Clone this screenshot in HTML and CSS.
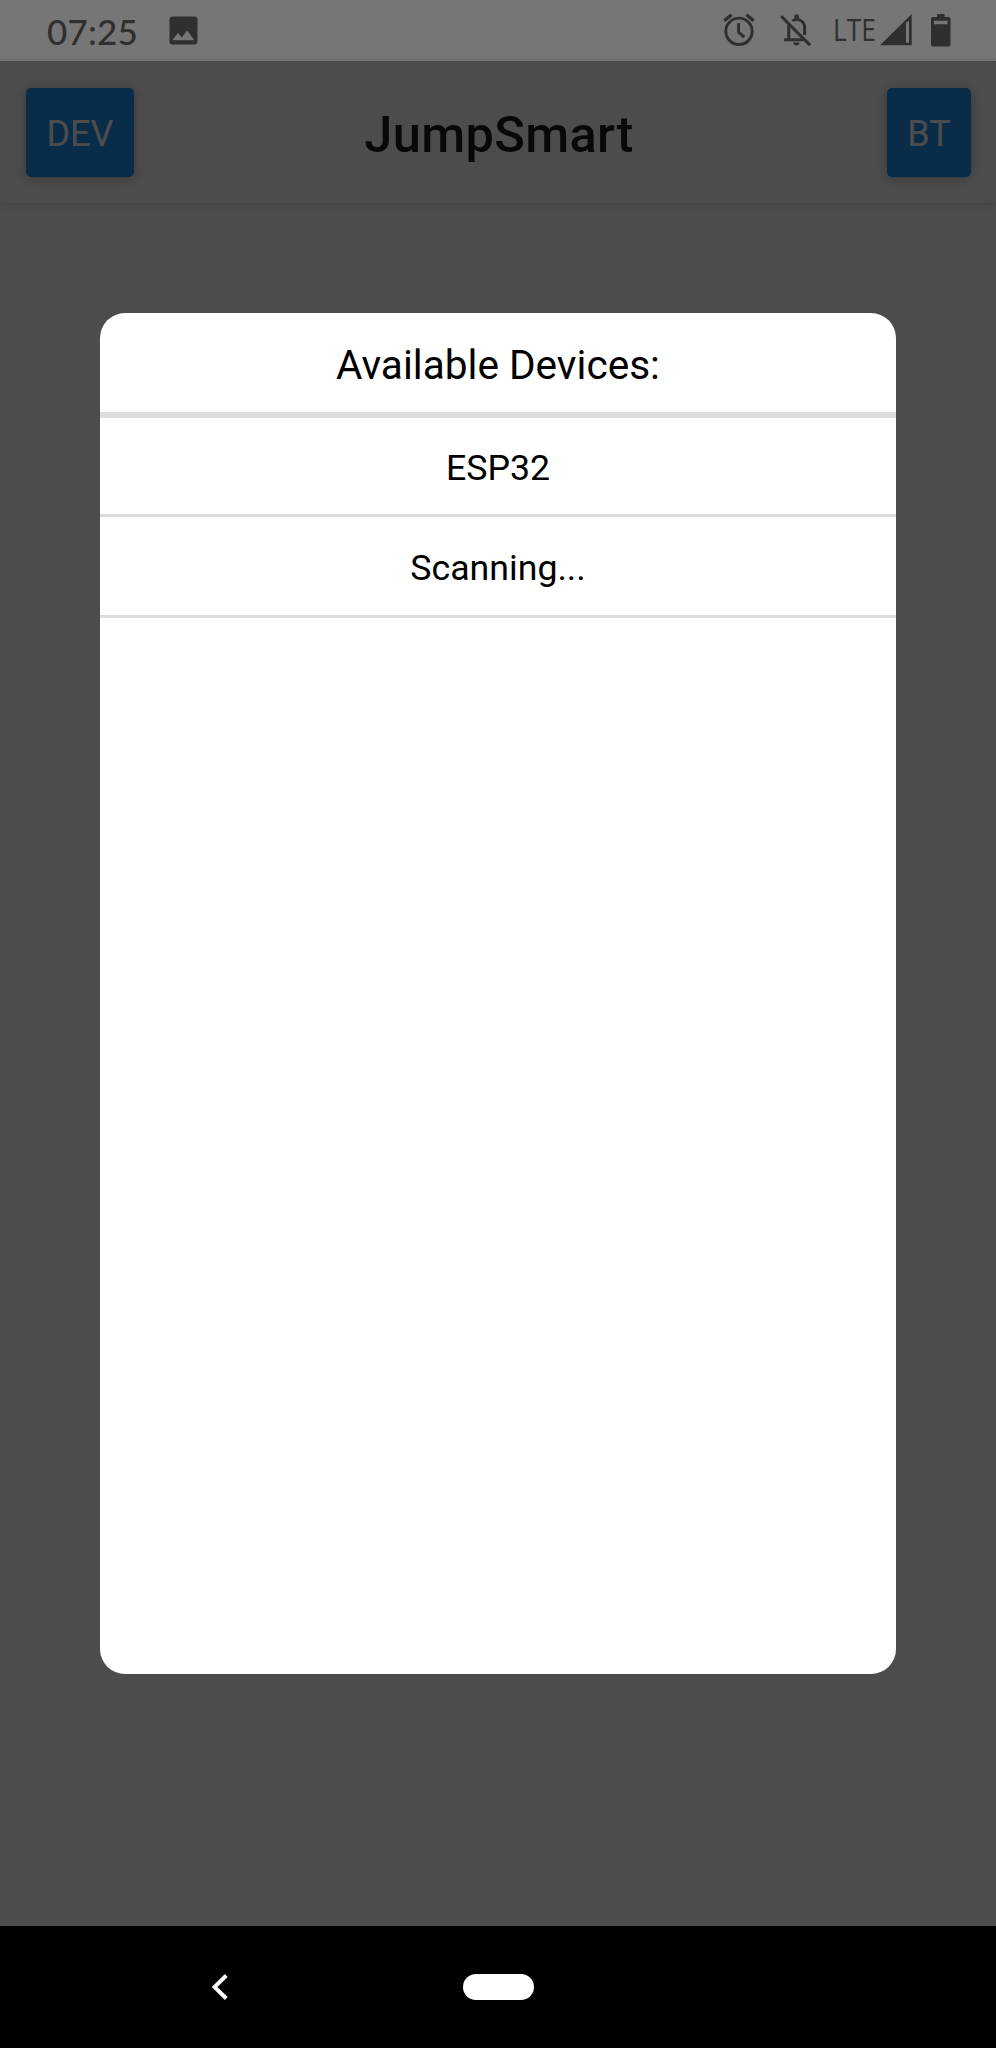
FILE: index.html
```html
<!DOCTYPE html>
<html lang="en">
<head>
<meta charset="utf-8">
<title>JumpSmart</title>
<link rel="stylesheet" href="styles.css">
</head>
<body>
<div class="phone">
  <div class="status">
    <span class="time">07:25</span>
    <svg class="picture" width="29" height="29" viewBox="0 0 29 29"><path fill="currentColor" fill-rule="evenodd" d="M3.5.5h22a3 3 0 0 1 3 3v22a3 3 0 0 1-3 3h-22a3 3 0 0 1-3-3v-22a3 3 0 0 1 3-3zM3.3 24.2h22L18.2 14.5l-5.4 7.1-3.8-4.8z"/></svg>
    <svg class="alarm" width="32" height="34" viewBox="0 0 32 34" fill="none" stroke="currentColor"><circle cx="16" cy="18.3" r="13.2" stroke-width="2.9"/><path stroke-width="3.4" d="M1.3 7.8 8.5 1.7M30.7 7.8 23.5 1.7"/><path stroke-width="2.9" d="M15.6 10.3v9l5.7 4.9"/></svg>
    <svg class="bell" width="31" height="33" viewBox="0 0 31 33" fill="none" stroke="currentColor"><path stroke-width="3" d="M1.2 2.2 30 31.2M8.7 11v14.5M4 25.8h20.8M12.500 6.9c2-1.5 5.4-1.8 8-.4 2.500 1.4 4.100 3.8 4.100 7v7.500"/><path fill="currentColor" stroke="none" d="M14.3 5V2.500a2.300 2.300 0 0 1 4.600 0V5zM13.300 28.600h6.100c0 3.800-6.100 3.800-6.100 0z"/></svg>
    <span class="lte">LTE</span>
    <svg class="signal" width="32" height="32" viewBox="0 0 32 32"><path fill="currentColor" fill-rule="evenodd" d="M0 31.2 31.7 0v31.200zM26 8.500v20.200h3V7z"/></svg>
    <svg class="battery" width="20" height="33" viewBox="0 0 20 33"><path fill="currentColor" fill-rule="evenodd" d="M6 0h7.600v3H17.500a2 2 0 0 1 2 2v25.500a2 2 0 0 1-2 2H2a2 2 0 0 1-2-2V5a2 2 0 0 1 2-2h4zM3 6.700v3.500h13.500V6.700z"/></svg>
  </div>
  <div class="app">
    <div class="header">
      <div class="button">DEV</div>
      <div class="title">JumpSmart</div>
      <div class="button bt">BT</div>
    </div>
    <div class="overlay">
      <div class="modal">
        <div class="heading"><span>Available Devices:</span></div>
        <div class="row"><span>ESP32</span></div>
        <div class="row"><span>Scanning...</span></div>
      </div>
    </div>
  </div>
  <div class="nav">
    <svg class="back" width="17" height="26" viewBox="0 0 17 26"><path d="M14.300 1.500 2.500 13 14.300 24.500" fill="none" stroke="#fff" stroke-width="3.900"/></svg>
    <div class="home"></div>
  </div>
</div>
</body>
</html>
```
FILE: styles.css
```css
* { box-sizing: border-box; }
body { margin: 0; font-family: Roboto, sans-serif; }
.phone { width: 996px; height: 2048px; display: flex; flex-direction: column; overflow: hidden; }

.status { height: 61px; background: #767676; color: #2f2f2f; display: flex; align-items: flex-start; }
.status svg { flex: none; }
.time { width: 92px; margin: 10px 0 0 47px; font: 500 35px/42px Lato, sans-serif; letter-spacing: .2px; white-space: nowrap; }
.picture { margin: 16px 0 0 30px; }
.alarm { margin: 13px 0 0 525px; }
.bell { margin: 14px 0 0 25px; }
.lte { width: 41px; margin: 8px 0 0 22px; font: 400 31px/42px "Open Sans", sans-serif; transform: scaleX(.85); transform-origin: 0 0; }
.signal { margin: 14px 0 0 6px; }
.battery { margin: 14px 0 0 19px; }

.app { flex: 1; position: relative; background: #fff; }
.header { height: 142px; padding: 0 25px 0 26px; display: flex; align-items: center; justify-content: space-between; background: #fff; box-shadow: 0 2px 10px rgba(0, 0, 0, .12); }
.button { width: 108px; height: 89px; border-radius: 5px; background: #2196f3; color: #fff; font-size: 36px; line-height: 93px; text-align: center; box-shadow: 0 2px 12px rgba(0, 0, 0, .28); }
.bt { width: 84px; }
.title { margin-left: -23px; padding-top: 6px; font-size: 50.500px; font-weight: 500; line-height: 60px; letter-spacing: .35px; color: #1c1c1e; }

.overlay { position: absolute; inset: 0; background: rgba(0, 0, 0, .7); display: flex; justify-content: center; align-items: flex-start; }
.modal { width: 795.300px; height: 1360.300px; margin-top: 252.400px; border-radius: 25px; background: #fff; color: #000; text-align: center; overflow: hidden; }
.heading { height: 104.600px; border-bottom: 6px solid #dcdcdc; font-size: 40.600px; line-height: 104px; }
.row { height: 99px; border-bottom: 3px solid #dcdcdc; font-size: 35.700px; line-height: 101px; }
.row + .row { height: 101px; line-height: 102px; }

.nav { height: 122px; background: #000; display: flex; align-items: center; }
.back { margin-left: 212px; }
.home { width: 71px; height: 26px; margin-left: 234px; border-radius: 13px; background: #fff; }
```
